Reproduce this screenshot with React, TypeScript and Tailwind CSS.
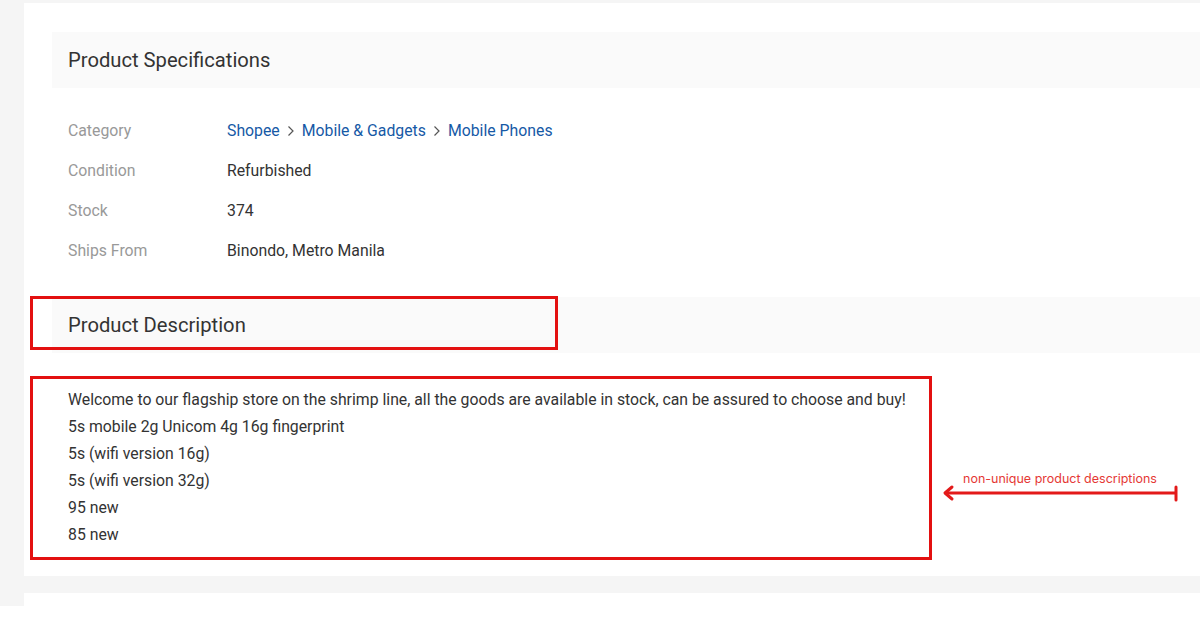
import React from "react";

const specs = [
  { label: "Category", value: null },
  { label: "Condition", value: "Refurbished" },
  { label: "Stock", value: "374" },
  { label: "Ships From", value: "Binondo, Metro Manila" },
];

const lines = [
  "Welcome to our flagship store on the shrimp line, all the goods are available in stock, can be assured to choose and buy!",
  "5s mobile 2g Unicom 4g 16g fingerprint",
  "5s (wifi version 16g)",
  "5s (wifi version 32g)",
  "95 new",
  "85 new",
];

function Chevron() {
  return (
    <svg width="8" height="12" viewBox="0 0 8 12" className="mx-[7px]">
      <path d="M1.5 1.5 L6 6 L1.5 10.5" fill="none" stroke="#555" strokeWidth="1.2" />
    </svg>
  );
}

function Crumbs() {
  return (
    <div className="flex items-center text-[#1659a6]">
      <span>Shopee</span>
      <Chevron />
      <span>Mobile &amp; Gadgets</span>
      <Chevron />
      <span>Mobile Phones</span>
    </div>
  );
}

export default function App() {
  return (
    <div
      className="relative w-[1200px] h-[630px] overflow-hidden bg-white"
      style={{ fontFamily: "Roboto, 'Liberation Sans', sans-serif" }}
    >
      <div className="bg-[#f5f5f5] pt-[3px] pl-[24px] h-[606px] flex flex-col">
        <div className="bg-white w-[1200px] pl-[28px] pt-[29px] pb-[28px]">
          <div className="h-[56px] bg-[#fafafa] pl-4 flex items-center text-[20.2px] text-[#333]">
            Product Specifications
          </div>
          <div className="mt-[23px] pl-4 text-[15.8px]">
            {specs.map((s) => (
              <div key={s.label} className="h-10 flex items-center">
                <div className="w-[159px] text-[#999]">{s.label}</div>
                {s.value ? <div className="text-[#333]">{s.value}</div> : <Crumbs />}
              </div>
            ))}
          </div>
          <div className="mt-[26px] h-[56px] bg-[#fafafa] pl-4 flex items-center text-[20.2px] text-[#333]">
            Product Description
          </div>
          <div className="mt-[33px] pl-4 text-[15.8px] leading-[27px] text-[#333]">
            {lines.map((l) => (
              <div key={l}>{l}</div>
            ))}
          </div>
        </div>
        <div className="mt-[17px] bg-white flex-1" />
      </div>

      {/* annotation overlays */}
      <div className="absolute left-[30px] top-[296px] w-[528px] h-[54px] border-[3px] border-[#e31010]" />
      <div className="absolute left-[30px] top-[376px] w-[902px] h-[184px] border-[3px] border-[#e31010]" />
      <div
        className="absolute left-[963px] top-[470px] text-[12.5px] text-[#e53935]"
        style={{ fontFamily: "Inter, sans-serif" }}
      >
        non-unique product descriptions
      </div>
      <svg className="absolute left-[940px] top-[484px]" width="242" height="20" viewBox="0 0 242 20">
        <path d="M5 9 H236" stroke="#e31a1a" strokeWidth="3" />
        <path d="M12 3 L5 9 L12 15" fill="none" stroke="#e31a1a" strokeWidth="3" strokeLinecap="round" strokeLinejoin="round" />
        <path d="M236 3 V16" stroke="#e31a1a" strokeWidth="3" strokeLinecap="round" />
      </svg>
    </div>
  );
}
